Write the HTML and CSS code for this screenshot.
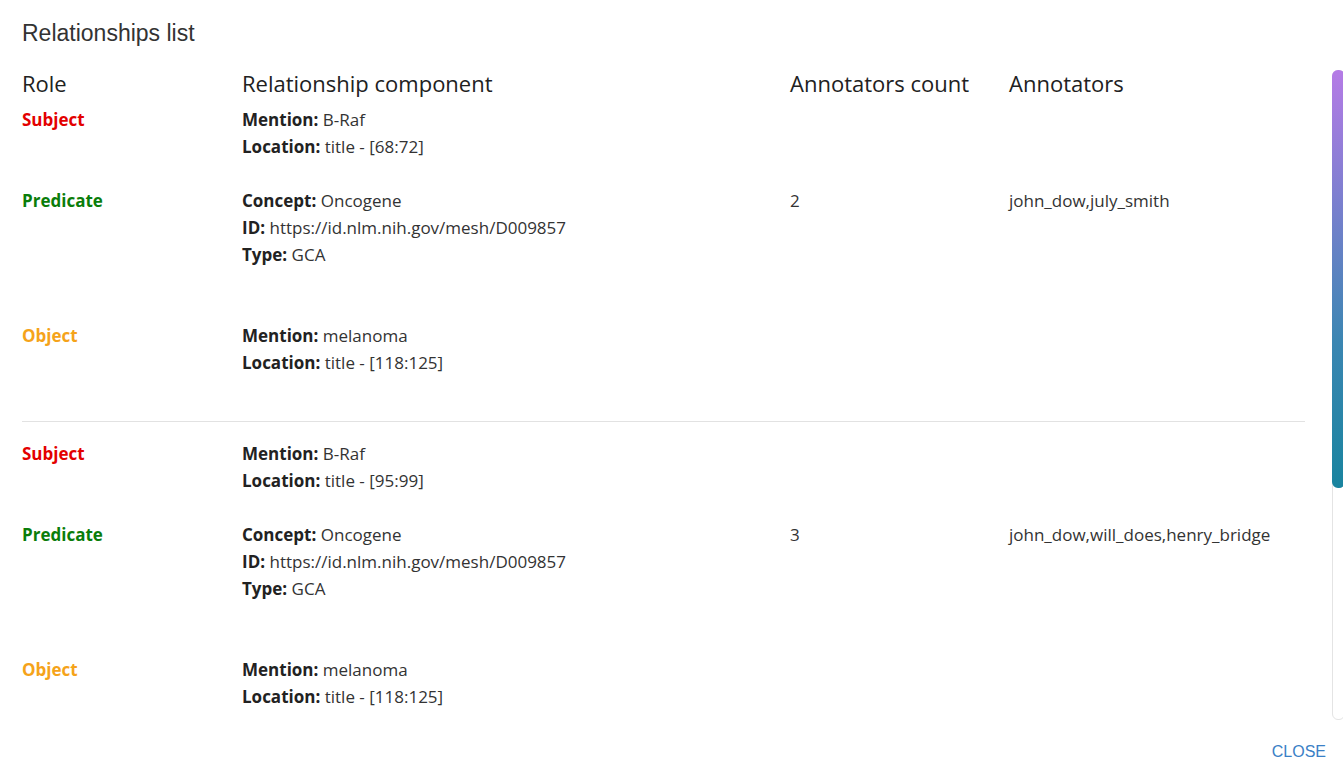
FILE: index.html
```html
<!DOCTYPE html>
<html>
<head>
<meta charset="utf-8">
<link rel="stylesheet" href="styles.css">
</head>
<body>
<div class="dialog">
  <h2 class="title">Relationships list</h2>
  <div class="content">
    <div class="table">
      <div class="row head">
        <div>Role</div>
        <div>Relationship component</div>
        <div>Annotators count</div>
        <div>Annotators</div>
      </div>
      <div class="group">
        <div class="row r-subject">
          <div class="role subject">Subject</div>
          <div class="comp"><div><b>Mention:</b> B-Raf</div><div><b>Location:</b> title - [68:72]</div></div>
          <div></div><div></div>
        </div>
        <div class="row r-predicate">
          <div class="role predicate">Predicate</div>
          <div class="comp"><div><b>Concept:</b> Oncogene</div><div><b>ID:</b> https://id.nlm.nih.gov/mesh/D009857</div><div><b>Type:</b> GCA</div></div>
          <div class="val">2</div>
          <div class="val">john_dow,july_smith</div>
        </div>
        <div class="row r-object">
          <div class="role object">Object</div>
          <div class="comp"><div><b>Mention:</b> melanoma</div><div><b>Location:</b> title - [118:125]</div></div>
          <div></div><div></div>
        </div>
      </div>
      <div class="group">
        <div class="row r-subject">
          <div class="role subject">Subject</div>
          <div class="comp"><div><b>Mention:</b> B-Raf</div><div><b>Location:</b> title - [95:99]</div></div>
          <div></div><div></div>
        </div>
        <div class="row r-predicate">
          <div class="role predicate">Predicate</div>
          <div class="comp"><div><b>Concept:</b> Oncogene</div><div><b>ID:</b> https://id.nlm.nih.gov/mesh/D009857</div><div><b>Type:</b> GCA</div></div>
          <div class="val">3</div>
          <div class="val">john_dow,will_does,henry_bridge</div>
        </div>
        <div class="row r-object">
          <div class="role object">Object</div>
          <div class="comp"><div><b>Mention:</b> melanoma</div><div><b>Location:</b> title - [118:125]</div></div>
          <div></div><div></div>
        </div>
      </div>
    </div>
    <div class="scrollbar"><div class="thumb"></div></div>
  </div>
  <div class="actions"><button class="close">Close</button></div>
</div>
</body>
</html>
```
FILE: styles.css
```css
* { box-sizing: border-box; }
html, body { margin: 0; padding: 0; background: #fff; }
body { width: 1343px; height: 776px; overflow: hidden; }
.dialog { height: 776px; display: flex; flex-direction: column; }
.title {
  margin: 0;
  padding: 20px 22px 19px;
  font-family: "Liberation Sans", Arial, sans-serif;
  font-weight: 400;
  font-size: 23px;
  line-height: 26px;
  color: #333;
}
.content {
  flex: 1;
  position: relative;
  overflow: hidden;
  padding: 4px 38px 0 22px;
  font-family: "Open Sans", sans-serif;
}
.table { width: 1283px; }
.row {
  display: grid;
  grid-template-columns: 220px 548px 219px 1fr;
}
.head {
  font-size: 22px;
  line-height: 28px;
  color: #212121;
  margin-bottom: 9px;
}
.group { border-bottom: 1px solid #e2e2e2; }
.group + .group { padding-top: 18px; border-bottom: none; }
.r-subject, .r-object, .r-predicate { font-size: 17px; line-height: 27px; color: #333; }
.r-subject { padding-bottom: 27px; }
.r-predicate { padding-bottom: 54px; }
.r-object { padding-bottom: 45px; }
.comp b { font-weight: 700; color: #222; }
.role { font-weight: 700; }
.subject { color: #e30000; }
.predicate { color: #0a7d0a; }
.object { color: #f5a31a; }
.scrollbar {
  position: absolute;
  top: 5px;
  right: -2px;
  width: 13px;
  height: 650px;
  border: 1px solid #e4e4e4;
  border-radius: 6px;
  background: #fff;
}
.thumb {
  margin: -1px 0 0 -1px;
  width: 13px;
  height: 418px;
  border-radius: 6px;
  background: linear-gradient(180deg, #b57be6 0%, #7e7fd0 30%, #3b86b2 65%, #19849f 100%);
}
.actions {
  height: 54px;
  display: flex;
  justify-content: flex-end;
  align-items: center;
  padding: 6px 17px 0 0;
}
.close {
  border: none;
  background: none;
  padding: 0;
  font-family: "Liberation Sans", Arial, sans-serif;
  font-size: 16px;
  text-transform: uppercase;
  color: #3a80c6;
}
```
